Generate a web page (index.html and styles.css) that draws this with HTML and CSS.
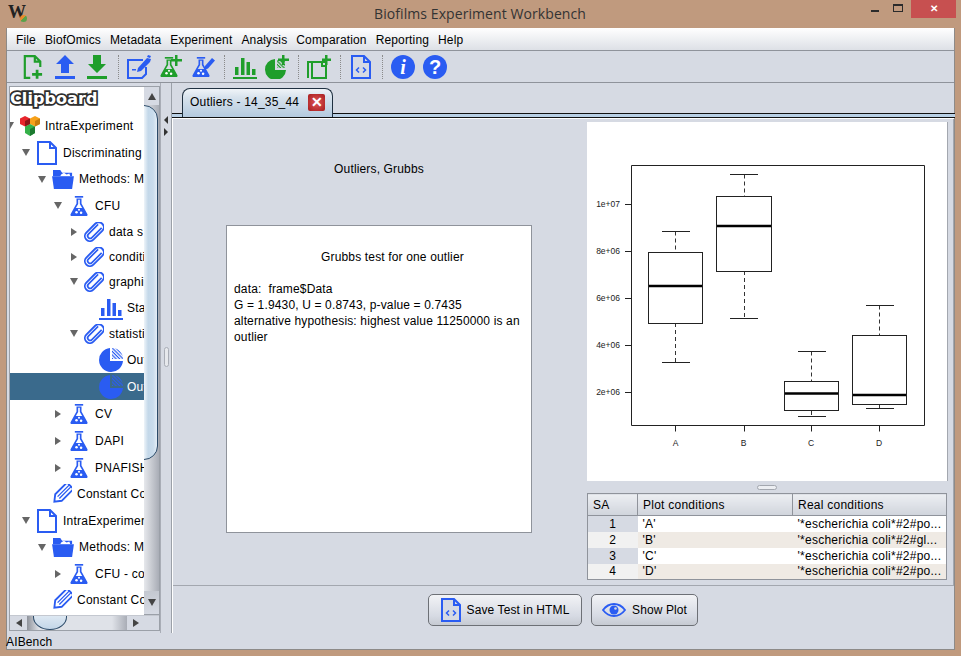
FILE: index.html
```html
<!DOCTYPE html>
<html lang="en">
<head>
    <meta charset="UTF-8">
    <meta name="viewport" content="width=device-width, initial-scale=1.0">
    <title>Biofilms Experiment Workbench</title>
    <link rel="stylesheet" href="styles.css">
</head>
<body>
    <svg class="defs" width="0" height="0">
        <defs>
            <pattern id="hatch" width="2.5" height="2.5" patternUnits="userSpaceOnUse" patternTransform="rotate(45)">
                <rect width="2.5" height="1.2" fill="#2a5cf2"></rect>
            </pattern>
            <pattern id="hatch-green" width="2.5" height="2.5" patternUnits="userSpaceOnUse" patternTransform="rotate(45)">
                <rect width="2.5" height="1.2" fill="#1f9e2b"></rect>
            </pattern>
            <symbol id="flask" viewBox="0 0 24 24">
                <rect x="7" y="0" width="10" height="2" fill="currentColor"></rect>
                <path fill="currentColor" fill-rule="evenodd" d="M9 3h6v6l7 12.500c.8 1.400 0 2.500-1.500 2.500h-17C2 24 1.200 22.900 2 21.500L9 9z M11 4.500V9.500L8.200 14.500h7.600L13 9.500V4.500z"></path>
                <circle cx="9" cy="19.500" r="1.500" fill="#fff"></circle>
                <circle cx="14.500" cy="20" r="1.500" fill="#fff"></circle>
                <circle cx="12" cy="16.500" r="1.200" fill="#fff"></circle>
            </symbol>
            <symbol id="doc" viewBox="0 0 20 24">
                <path fill="#fff" stroke="currentColor" stroke-width="2" d="M1 1h12l6 6v16H1z"></path>
                <path fill="currentColor" d="M12 1h2v5h5v2h-7z"></path>
            </symbol>
            <symbol id="folder" viewBox="0 0 24 22">
                <path fill="currentColor" d="M1 1h8l2 3h11v4H1z"></path>
                <path fill="#fff" d="M10 6l3-2 3 2 3-1 1 3H9z"></path>
                <path fill="currentColor" d="M0 8h24l-2 14H2z"></path>
            </symbol>
            <symbol id="clip" viewBox="0 0 24 24">
                <g transform="rotate(45 12 12)" fill="none" stroke="currentColor">
                    <rect x="6" y="-2" width="12" height="27" rx="6" stroke-width="2.200"></rect>
                    <path d="M15 2v16.500a3 3 0 0 1-6 0V2" stroke-width="2"></path>
                </g>
            </symbol>
            <symbol id="pencil" viewBox="0 0 24 24">
                <g transform="rotate(45 12 12)" fill="none" stroke="currentColor">
                    <path d="M6.500 -2h11v20l-5.500 7-5.500-7z" stroke-width="2.200"></path>
                    <path d="M10.500 -2v20M13.500 -2v20" stroke-width="1.600"></path>
                </g>
            </symbol>
            <symbol id="bars" viewBox="0 0 24 24">
                <path fill="currentColor" d="M2 12h3.500v8H2zM8 3h3.500v17H8zM13.500 7H17v13h-3.500zM19 14h3.500v6H19zM0 22h24v2H0z"></path>
            </symbol>
            <symbol id="pie" viewBox="0 0 24 24">
                <path fill="currentColor" d="M11 0v13h13A12 12 0 1 1 11 0z"></path>
                <path fill="url(#hatch)" d="M13 0a11 11 0 0 1 11 11H13z"></path>
            </symbol>
            <symbol id="cubes" viewBox="0 0 22 22">
                <path fill="#e8262c" d="M6 1l5 2.500v5.500l-5 2.500-5-2.500V3.500z"></path>
                <path fill="#f7a11a" d="M16 1l5 2.500v5.500l-5 2.500-5-2.500V3.500z"></path>
                <path fill="#35b14a" d="M11 9l5 2.500V18l-5 3-5-3v-6.500z"></path>
                <path fill="#8f1518" d="M6 6l5-2.500V9l-5 2.500z"></path>
                <path fill="#c77c0c" d="M16 6l5-2.500V9l-5 2.500z"></path>
                <path fill="#1c7a30" d="M11 14l5-2.500V18l-5 3z"></path>
            </symbol>
            <symbol id="html" viewBox="0 0 20 24">
                <path fill="#d6dae3" stroke="currentColor" stroke-width="2" d="M1 1h12l6 6v16H1z"></path>
                <path fill="currentColor" d="M12 1h2v5h5v2h-7z"></path>
                <path fill="none" stroke="currentColor" stroke-width="1.500" d="M8 12.500l-2.500 2.500 2.500 2.500M12 12.500l2.500 2.500-2.500 2.500"></path>
            </symbol>
        </defs>
    </svg>

    <header class="titlebar">
        <span class="app-logo">W<i></i></span>
        <span class="app-title">Biofilms Experiment Workbench</span>
        <div class="win-controls">
            <span class="win-min"></span>
            <span class="win-max"></span>
            <span class="win-close">✕</span>
        </div>
    </header>

    <div class="window">
        <nav class="menubar">
            <span>File</span>
            <span>BiofOmics</span>
            <span>Metadata</span>
            <span>Experiment</span>
            <span>Analysis</span>
            <span>Comparation</span>
            <span>Reporting</span>
            <span>Help</span>
        </nav>

        <div class="toolbar">
            <span class="tool green">
                <svg width="20" height="24" viewBox="0 0 22 26"><path fill="none" stroke="currentColor" stroke-width="2.400" d="M8 25H2V1h11l6 6v6M13 1v6h6"></path><path fill="currentColor" d="M14 16h3v3.500h4v3h-4V26h-3v-3.500h-4v-3h4z"></path></svg>
            </span>
            <span class="tool blue">
                <svg width="20" height="24" viewBox="0 0 20 24"><path fill="currentColor" d="M10 0l9 9h-5v9H6V9H1zM0 21h20v3H0z"></path></svg>
            </span>
            <span class="tool green">
                <svg width="20" height="24" viewBox="0 0 20 24"><path fill="currentColor" d="M6 0h8v9h5l-9 9-9-9h5zM0 21h20v3H0z"></path></svg>
            </span>
            <span class="tool-sep"></span>
            <span class="tool blue">
                <svg width="24" height="24" viewBox="0 0 24 24"><path fill="none" stroke="currentColor" stroke-width="2" d="M16 5H1v18h14l4-4v-7"></path><path fill="currentColor" d="M5 14h4v1.500H5zM10 17l1-4L20 3l4 1-1 3-9 9zM21 0l3 1-1 2-3-1z"></path></svg>
            </span>
            <span class="tool green">
                <svg width="24" height="24" viewBox="0 0 24 24"><use href="#flask" x="0" y="0" width="20" height="24"></use><path fill="currentColor" d="M16 0h2.500v4H23v2.500h-4.500V11H16V6.500h-4V4h4z"></path></svg>
            </span>
            <span class="tool blue">
                <svg width="24" height="24" viewBox="0 0 24 24"><use href="#flask" x="0" y="0" width="20" height="24"></use><path fill="currentColor" d="M14 11l7-8 3 2.500-7 8-4 1.500z"></path></svg>
            </span>
            <span class="tool-sep"></span>
            <span class="tool green">
                <svg width="24" height="24" viewBox="0 0 24 24"><use href="#bars" width="24" height="24"></use></svg>
            </span>
            <span class="tool green">
                <svg width="24" height="24" viewBox="0 0 24 24"><path fill="currentColor" d="M10 4v11h11a10.500 10.500 0 1 1-11-11z"></path><path fill="url(#hatch-green)" d="M12 5h8v8h-8z"></path><path fill="currentColor" d="M17 0h2.500v3.500H24V6h-4.500v4H17V6h-4V3.500h4z"></path></svg>
            </span>
            <span class="tool-sep"></span>
            <span class="tool green">
                <svg width="24" height="24" viewBox="0 0 24 24"><path fill="none" stroke="currentColor" stroke-width="2" d="M1 23V7h4M5 23h14V7H5zM15 7v4h4"></path><path fill="currentColor" d="M18 0h2.500v3.500H24V6h-3.500v4H18V6h-3V3.500h3z"></path></svg>
            </span>
            <span class="tool-sep"></span>
            <span class="tool blue">
                <svg width="20" height="24"><use href="#html" width="20" height="24"></use></svg>
            </span>
            <span class="tool-sep"></span>
            <span class="tool blue">
                <svg width="24" height="24" viewBox="0 0 24 24"><circle cx="12" cy="12" r="12" fill="currentColor"></circle><text x="12" y="19" text-anchor="middle" class="glyph-i">i</text></svg>
            </span>
            <span class="tool blue">
                <svg width="24" height="24" viewBox="0 0 24 24"><circle cx="12" cy="12" r="12" fill="currentColor"></circle><text x="12" y="19" text-anchor="middle" class="glyph-q">?</text></svg>
            </span>
        </div>

        <div class="workspace">
            <aside class="dock">
                <div class="dock-box">
                    <div class="dock-main">
                        <div class="tree">
                            <div class="clipboard-title">Clipboard</div>
                            <div class="row h27 lv0"><span class="tw open"></span><span class="ico w30"><svg width="22" height="22"><use href="#cubes"></use></svg></span>IntraExperiment</div>
                            <div class="row h27 lv1"><span class="tw open"></span><span class="ico"><svg width="20" height="24"><use href="#doc"></use></svg></span>Discriminating</div>
                            <div class="row h26 lv2"><span class="tw open"></span><span class="ico"><svg width="24" height="20"><use href="#folder"></use></svg></span>Methods: Me</div>
                            <div class="row h27 lv3"><span class="tw open"></span><span class="ico"><svg width="20" height="24"><use href="#flask"></use></svg></span>CFU</div>
                            <div class="row h25 lv4"><span class="tw closed"></span><span class="ico w30"><svg width="20" height="20"><use href="#clip"></use></svg></span>data s</div>
                            <div class="row h25 lv4"><span class="tw closed"></span><span class="ico w30"><svg width="20" height="20"><use href="#clip"></use></svg></span>conditi</div>
                            <div class="row h25 lv4"><span class="tw open"></span><span class="ico w30"><svg width="20" height="20"><use href="#clip"></use></svg></span>graphi</div>
                            <div class="row h27 lv5"><span class="tw"></span><span class="ico"><svg width="24" height="24"><use href="#bars"></use></svg></span>Sta</div>
                            <div class="row h25 lv4"><span class="tw open"></span><span class="ico w30"><svg width="20" height="20"><use href="#clip"></use></svg></span>statisti</div>
                            <div class="row h27 lv5"><span class="tw"></span><span class="ico"><svg width="24" height="24"><use href="#pie"></use></svg></span>Out</div>
                            <div class="row h27 lv5 selected"><span class="tw"></span><span class="ico"><svg width="24" height="24"><use href="#pie"></use></svg></span>Out</div>
                            <div class="row h27 lv3"><span class="tw closed"></span><span class="ico"><svg width="20" height="24"><use href="#flask"></use></svg></span>CV</div>
                            <div class="row h27 lv3"><span class="tw closed"></span><span class="ico"><svg width="20" height="24"><use href="#flask"></use></svg></span>DAPI</div>
                            <div class="row h27 lv3"><span class="tw closed"></span><span class="ico"><svg width="20" height="24"><use href="#flask"></use></svg></span>PNAFISH</div>
                            <div class="row h26 lv2"><span class="tw"></span><span class="ico w30"><svg width="20" height="20"><use href="#pencil"></use></svg></span>Constant Co</div>
                            <div class="row h27 lv1"><span class="tw open"></span><span class="ico"><svg width="20" height="24"><use href="#doc"></use></svg></span>IntraExperimen</div>
                            <div class="row h26 lv2"><span class="tw open"></span><span class="ico"><svg width="24" height="20"><use href="#folder"></use></svg></span>Methods: Me</div>
                            <div class="row h27 lv3"><span class="tw closed"></span><span class="ico"><svg width="20" height="24"><use href="#flask"></use></svg></span>CFU - co</div>
                            <div class="row h26 lv2"><span class="tw"></span><span class="ico w30"><svg width="20" height="20"><use href="#pencil"></use></svg></span>Constant Co</div>
                        </div>
                        <div class="vscroll">
                            <div class="sb-btn"><span class="arr up"></span></div>
                            <div class="vtrack"><div class="vthumb"></div></div>
                            <div class="sb-btn tall"><span class="arr down"></span></div>
                        </div>
                    </div>
                    <div class="hscroll">
                        <div class="sb-btn side"><span class="arr left"></span></div>
                        <div class="htrack"><div class="hthumb"></div></div>
                        <div class="sb-btn side"><span class="arr right"></span></div>
                        <div class="sb-corner"></div>
                    </div>
                </div>
            </aside>

            <div class="splitter">
                <span class="arr left small"></span>
                <span class="arr right small"></span>
                <span class="grip"></span>
            </div>

            <main class="tabs">
                <div class="tab-strip">
                    <div class="tab">
                        Outliers - 14_35_44
                        <span class="tab-close">✕</span>
                    </div>
                </div>
                <div class="tab-band"></div>
                <div class="tab-body">
                    <div class="panels">
                        <section class="result">
                            <h2 class="result-title">Outliers, Grubbs</h2>
                            <div class="result-box">
                                <p class="test-name">Grubbs test for one outlier</p>
                                <p class="test-text">data:  frame$Data
G = 1.9430, U = 0.8743, p-value = 0.7435
alternative hypothesis: highest value 11250000 is an outlier</p>
                            </div>
                        </section>
                        <section class="plot-side">
                            <div class="plot">
                                <svg class="boxplot" width="360" height="359" viewBox="587 122 360 359">
                                    <g class="axis">
                                        <path d="M631.500 165.500H924.500V425.500H631.500Z"></path>
                                        <path d="M625 204.500h6.500M625 251.500h6.500M625 298.500h6.500M625 345.500h6.500M625 392.500h6.500"></path>
                                        <path d="M675.500 425.500v6M744.500 425.500v6M811.500 425.500v6M879.500 425.500v6"></path>
                                    </g>
                                    <g class="tick-y">
                                        <text x="620" y="207">1e+07</text>
                                        <text x="620" y="254">8e+06</text>
                                        <text x="620" y="301">6e+06</text>
                                        <text x="620" y="348">4e+06</text>
                                        <text x="620" y="395">2e+06</text>
                                    </g>
                                    <g class="tick-x">
                                        <text x="675.500" y="445.500">A</text>
                                        <text x="743.500" y="445.500">B</text>
                                        <text x="811" y="445.500">C</text>
                                        <text x="879" y="445.500">D</text>
                                    </g>
                                    <g class="whisker">
                                        <path d="M675.500 231.500V252M675.500 323V362"></path>
                                        <path d="M744.500 174.500V196M744.500 271V318"></path>
                                        <path d="M811.500 351.500V381M811.500 411V416"></path>
                                        <path d="M879.500 305.500V335M879.500 405V408"></path>
                                    </g>
                                    <g class="axis">
                                        <path d="M662 231.500h28M662 362.500h28"></path>
                                        <path d="M730 174.500h28M730 318.500h28"></path>
                                        <path d="M798 351.500h28M798 416.500h28"></path>
                                        <path d="M866 305.500h28M866 408.500h28"></path>
                                        <rect x="648.500" y="252.500" width="54" height="71"></rect>
                                        <rect x="716.500" y="196.500" width="55" height="75"></rect>
                                        <rect x="784.500" y="381.500" width="54" height="29"></rect>
                                        <rect x="852.500" y="335.500" width="54" height="69"></rect>
                                    </g>
                                    <g class="median">
                                        <path d="M649 286h53M717 226h54M785 393.500h53M853 395h53"></path>
                                    </g>
                                </svg>
                            </div>
                            <div class="h-split"><span></span></div>
                            <table class="sa-table">
                                <thead>
                                    <tr><th class="c-sa">SA</th><th class="c-plot">Plot conditions</th><th>Real conditions</th></tr>
                                </thead>
                                <tbody>
                                    <tr><td class="sa">1</td><td>'A'</td><td>'*escherichia coli*#2#po...</td></tr>
                                    <tr><td class="sa">2</td><td>'B'</td><td>'*escherichia coli*#2#gl...</td></tr>
                                    <tr><td class="sa">3</td><td>'C'</td><td>'*escherichia coli*#2#po...</td></tr>
                                    <tr><td class="sa">4</td><td>'D'</td><td>'*escherichia coli*#2#po...</td></tr>
                                </tbody>
                            </table>
                        </section>
                    </div>
                    <div class="actions">
                        <button class="btn btn-save"><svg class="blue" width="20" height="28"><use href="#html" width="20" height="28"></use></svg>Save Test in HTML</button>
                        <button class="btn btn-plot">
                            <svg class="blue" width="24" height="14" viewBox="0 0 24 14"><path fill="none" stroke="currentColor" stroke-width="1.800" d="M1 7c3-4 7-6 11-6s8 2 11 6c-3 4-7 6-11 6S4 11 1 7z"></path><circle cx="12" cy="7" r="4.500" fill="currentColor"></circle><circle cx="13.500" cy="5.500" r="1.300" fill="#d6dae3"></circle></svg>
                            Show Plot
                        </button>
                    </div>
                </div>
            </main>
        </div>

        <footer class="statusbar">AIBench</footer>
    </div>
</body>
</html>
```

FILE: styles.css
```css
* {
    box-sizing: border-box;
}

html, body {
    margin: 0;
    height: 100%;
}

body {
    width: 961px;
    height: 656px;
    overflow: hidden;
    display: flex;
    flex-direction: column;
    background-color: #c09a7e;
    font-family: "Liberation Sans", Arial, sans-serif;
    font-size: 12px;
    letter-spacing: 0.15px;
    color: #000;
}

.defs {
    position: absolute;
}

.blue {
    color: #2a5cf2;
}

.green {
    color: #1f9e2b;
}

/* title bar */
.titlebar {
    height: 28px;
    flex: none;
    display: flex;
    align-items: flex-start;
}

.app-logo {
    margin: 3px 0 0 8px;
    font-family: "Liberation Serif", serif;
    font-weight: bold;
    font-size: 18px;
    letter-spacing: 0;
    line-height: 18px;
    color: #222;
    position: relative;
}

.app-logo i {
    position: absolute;
    right: -1px;
    bottom: -1px;
    width: 7px;
    height: 7px;
    border-radius: 50%;
    background: linear-gradient(135deg, #e88a2c 50%, #5aa24a 50%);
}

.app-title {
    flex: 1;
    text-align: center;
    margin: 5px 0 0 63px;
    font-family: "Open Sans", sans-serif;
    font-size: 14px;
    line-height: 18px;
    letter-spacing: 0.08px;
    color: #333;
}

.win-controls {
    display: flex;
    align-items: flex-start;
    margin-right: 5px;
}

.win-min {
    width: 8px;
    height: 2px;
    margin: 10px 14px 0 0;
    background-color: #2b2b2b;
}

.win-max {
    width: 10px;
    height: 8px;
    margin: 4px 8px 0 0;
    border: 1px solid #2b2b2b;
    border-top-width: 2px;
}

.win-close {
    width: 45px;
    height: 18px;
    background-color: #c75050;
    color: #fff;
    font-size: 10px;
    font-weight: bold;
    line-height: 17px;
    text-align: center;
    letter-spacing: 0;
}

/* window frame */
.window {
    height: 622px;
    margin: 0 6px;
    flex: none;
    display: flex;
    flex-direction: column;
    border: 1px solid #8d8a88;
    border-top: 0;
    background-color: #d6dae3;
}

.menubar {
    height: 23px;
    flex: none;
    display: flex;
    gap: 9px;
    align-items: center;
    padding: 1px 0 0 9px;
    background: linear-gradient(#ffffff, #dde0e6);
    border-bottom: 1px solid #8f939b;
}

.toolbar {
    height: 32px;
    flex: none;
    display: flex;
    align-items: center;
    padding: 0 0 0 10px;
    border-bottom: 1px solid #8f939b;
}

.tool {
    width: 32px;
    display: flex;
    justify-content: center;
}

.tool svg {
    display: block;
}

.tool-sep {
    height: 24px;
    margin: 0 4px 0 5px;
    border-left: 1px dotted #8a8a8a;
}

.glyph-i {
    font-family: "Liberation Serif", serif;
    font-weight: bold;
    font-style: italic;
    font-size: 20px;
    fill: #fff;
}

.glyph-q {
    font-weight: bold;
    font-size: 20px;
    letter-spacing: 0;
    fill: #fff;
}

.workspace {
    flex: 1;
    min-height: 0;
    display: flex;
}

/* left dock with the clipboard tree */
.dock {
    width: 153px;
    flex: none;
    padding: 3px 0 2px 2px;
}

.dock-box {
    height: 100%;
    display: flex;
    flex-direction: column;
    border: 1px solid #9ba0a8;
}

.dock-main {
    flex: 1;
    min-height: 0;
    display: flex;
}

.tree {
    width: 134px;
    flex: none;
    overflow: hidden;
    background-color: #fff;
    letter-spacing: 0.25px;
}

.clipboard-title {
    height: 25px;
    padding-top: 1px;
    font-family: "DejaVu Sans", sans-serif;
    font-weight: bold;
    font-size: 16px;
    line-height: 22px;
    letter-spacing: 0.1px;
    color: #fff;
    paint-order: stroke fill;
    -webkit-text-stroke: 3.5px #2e2e2e;
}

.row {
    display: flex;
    align-items: center;
    white-space: nowrap;
}

.h25 { height: 25px; }
.h26 { height: 26px; }
.h27 { height: 27px; }

.lv0 { padding-left: 0; margin-left: -5px; }
.lv1 { padding-left: 11px; }
.lv2 { padding-left: 27px; }
.lv3 { padding-left: 43px; }
.lv4 { padding-left: 59px; }
.lv5 { padding-left: 75px; }

.row.selected {
    background-color: #3a6a8c;
    color: #fff;
}

.tw {
    width: 10px;
    flex: none;
    display: flex;
    justify-content: center;
}

.tw.open::before {
    content: "";
    border-style: solid;
    border-width: 7px 4.5px 0;
    border-color: #666 transparent transparent;
}

.tw.closed::before {
    content: "";
    border-style: solid;
    border-width: 4.5px 0 4.5px 6px;
    border-color: transparent transparent transparent #666;
}

.ico {
    width: 32px;
    flex: none;
    display: flex;
    justify-content: center;
    color: #2a5cf2;
}

.ico.w30 {
    width: 30px;
}

.ico svg {
    display: block;
}

/* scrollbars */
.vscroll {
    width: 15px;
    flex: none;
    display: flex;
    flex-direction: column;
    background: linear-gradient(90deg, #e6e8ec, #a9adb6);
}

.sb-btn {
    height: 18px;
    flex: none;
    display: flex;
    align-items: center;
    justify-content: center;
    background-color: #d6dae3;
}

.sb-btn.tall {
    height: 24px;
    background: linear-gradient(#c4c8d0, #d6dae3);
    border-bottom: 1px solid #9ba0a8;
}

.sb-btn.side {
    width: 17px;
    height: 100%;
}

.vtrack {
    flex: 1;
    min-height: 0;
    overflow: hidden;
}

.vthumb {
    width: 28px;
    height: 355px;
    margin-left: -14px;
    border: 1px solid #2b4a68;
    border-radius: 14px;
    background: linear-gradient(90deg, #eef4f9 50%, #c4d8e9 66%, #c9dcec 85%, #e4edf5);
}

.hscroll {
    height: 15px;
    flex: none;
    display: flex;
    background-color: #d6dae3;
    border-top: 1px solid #c4c8d0;
}

.htrack {
    width: 100px;
    flex: none;
    padding-left: 6px;
    overflow: hidden;
    background: linear-gradient(90deg, #8e929a, #dfe2e8 12%, #dfe2e8 85%, #a9adb6);
}

.hthumb {
    width: 34px;
    height: 26px;
    margin-top: -12px;
    border: 1px solid #2b4a68;
    border-radius: 50%;
    background: linear-gradient(#f3f7fb, #c3d6e8);
}

.sb-corner {
    flex: 1;
}

.arr {
    display: block;
    border-style: solid;
    border-color: transparent;
}

.arr.up {
    border-width: 0 4.5px 7px;
    border-bottom-color: #444;
}

.arr.down {
    border-width: 7px 4.5px 0;
    border-top-color: #444;
}

.arr.left {
    border-width: 4px 6px 4px 0;
    border-right-color: #444;
}

.arr.right {
    border-width: 4px 0 4px 6px;
    border-left-color: #444;
}

.arr.small.left {
    border-width: 4px 4px 4px 0;
    border-right-color: #333;
}

.arr.small.right {
    border-width: 4px 0 4px 4px;
    border-left-color: #333;
}

.splitter {
    width: 12px;
    flex: none;
    display: flex;
    flex-direction: column;
    align-items: center;
    gap: 4px;
    padding-top: 33px;
    border-left: 1px solid #a9adb6;
    border-right: 1px solid #9ba0a8;
}

.grip {
    width: 5px;
    height: 20px;
    margin-top: 207px;
    border: 1px solid #a9adb6;
    border-radius: 3px;
    background-color: #e6e8ec;
}

/* tabs */
.tabs {
    flex: 1;
    min-width: 0;
    display: flex;
    flex-direction: column;
}

.tab-strip {
    height: 30px;
    flex: none;
    display: flex;
    align-items: flex-end;
    padding-left: 10px;
}

.tab {
    width: 151px;
    height: 29px;
    margin-bottom: -4px;
    position: relative;
    display: flex;
    align-items: flex-start;
    gap: 9px;
    padding: 6px 0 0 7px;
    line-height: 15px;
    letter-spacing: 0.2px;
    white-space: nowrap;
    border: 1px solid #1f3040;
    border-bottom: 0;
    border-radius: 8px 8px 0 0;
    background: linear-gradient(#f0f4f8, #d7e2ec 30%, #b4cadf);
}

.tab-close {
    width: 17px;
    height: 17px;
    margin-top: -1px;
    border-radius: 2px;
    background: radial-gradient(#e0575a, #a61c1c);
    color: #fff;
    font-size: 14px;
    font-weight: bold;
    line-height: 17px;
    text-align: center;
    letter-spacing: 0;
}

.tab-band {
    height: 5px;
    flex: none;
    margin-right: -1px;
    background-color: #b8cfe4;
    border-top: 1px solid #111;
    border-bottom: 1px solid #111;
}

.tab-body {
    flex: 1;
    min-height: 0;
    display: flex;
    flex-direction: column;
    border-top: 1px solid #fff;
    border-left: 1px solid #fff;
}

.panels {
    height: 467px;
    flex: none;
    display: flex;
    border-bottom: 1px solid #a3a7af;
    border-right: 1px solid #a3a7af;
}

.result {
    width: 414px;
    flex: none;
    display: flex;
    flex-direction: column;
    align-items: center;
    padding: 43px 2px 0 0;
}

.result-title {
    margin: 0 0 49px 0;
    font-size: 12px;
    font-weight: normal;
    line-height: 14px;
}

.result-box {
    width: 306px;
    height: 308px;
    padding: 23px 2px 0 7px;
    background-color: #fff;
    border: 1px solid #8f939b;
    line-height: 16px;
}

.test-name {
    margin: 0 0 16px 0;
    padding-left: 22px;
    text-align: center;
}

.test-text {
    margin: 0;
    white-space: pre-wrap;
}

.plot-side {
    width: 360px;
    flex: none;
    display: flex;
    flex-direction: column;
    padding-top: 3px;
}

.plot {
    height: 359px;
    flex: none;
    background-color: #fff;
    box-shadow: 1px 0 0 #a3a7af;
}

.boxplot {
    display: block;
}

.axis path, .axis rect {
    fill: none;
    stroke: #222;
    stroke-width: 1;
}

.whisker path {
    fill: none;
    stroke: #333;
    stroke-width: 1;
    stroke-dasharray: 4 3;
}

.median path {
    fill: none;
    stroke: #000;
    stroke-width: 2.500;
}

.tick-y text, .tick-x text {
    font-size: 8.500px;
    letter-spacing: 0;
    fill: #222;
}

.tick-y text {
    text-anchor: end;
}

.tick-x text {
    text-anchor: middle;
}

.h-split {
    height: 12px;
    flex: none;
    display: flex;
    justify-content: center;
    align-items: flex-start;
    padding-top: 3px;
    border-top: 1px solid #d6dae3;
}

.h-split span {
    width: 20px;
    height: 5px;
    border: 1px solid #a3a7af;
    border-radius: 3px;
    background-color: #eceef2;
}

.sa-table {
    width: 360px;
    table-layout: fixed;
    border-collapse: collapse;
    border: 1px solid #8f939b;
    letter-spacing: 0.25px;
}

.sa-table th {
    height: 22px;
    padding: 0 0 0 5px;
    text-align: left;
    font-weight: normal;
    background: linear-gradient(#eceef2, #d0d4dc);
    border-right: 1px solid #8f939b;
    border-bottom: 1px solid #8f939b;
}

.sa-table .c-sa {
    width: 50px;
}

.sa-table .c-plot {
    width: 155px;
}

.sa-table td {
    height: 16px;
    padding: 0 0 0 5px;
    line-height: 14px;
    white-space: nowrap;
    overflow: hidden;
}

.sa-table tbody tr:nth-child(odd) {
    background-color: #fff;
}

.sa-table tbody tr:nth-child(even) {
    background-color: #efeae4;
}

.sa-table td.sa {
    padding: 0;
    text-align: center;
    background-color: #d6dae3;
}

.sa-table tr:nth-child(even) td.sa {
    background-color: #f1f1f1;
}

/* bottom buttons */
.actions {
    flex: 1;
    display: flex;
    gap: 9px;
    padding: 8px 0 0 255px;
}

.btn {
    height: 32px;
    display: flex;
    align-items: center;
    justify-content: center;
    gap: 6px;
    padding: 0;
    font: inherit;
    letter-spacing: 0.1px;
    color: #000;
    border: 1px solid #6d7076;
    border-radius: 5px;
    background: linear-gradient(#f2f3f6, #d6dae3 70%, #c6cad2);
}

.btn-save {
    width: 154px;
}

.btn-plot {
    width: 107px;
}

.statusbar {
    height: 16px;
    flex: none;
    padding-top: 1px;
    line-height: 16px;
    margin-left: -1px;
}
```
